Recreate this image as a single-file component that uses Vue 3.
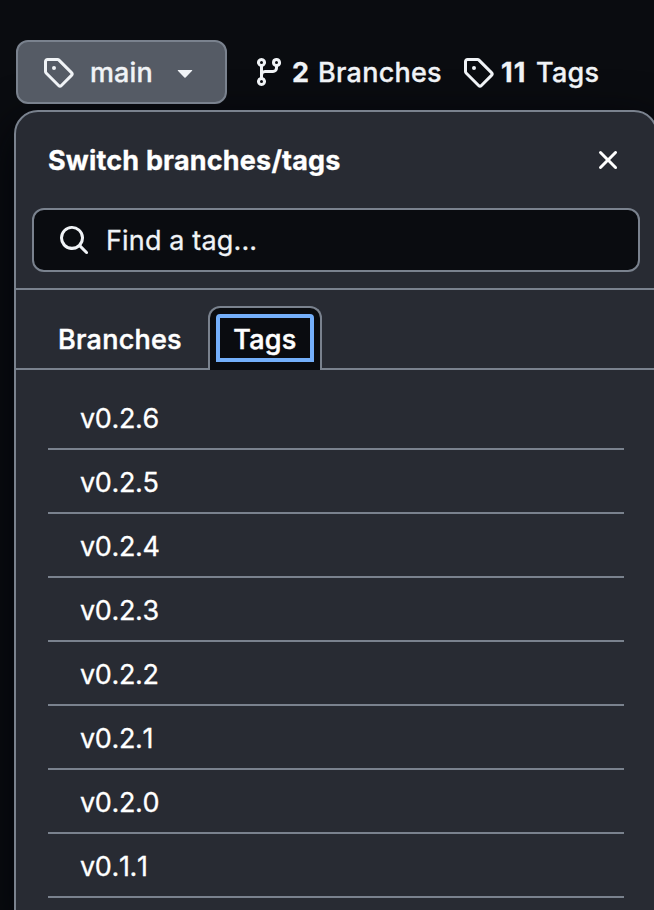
<script setup>
import { ref } from 'vue'

const tags = ['v0.2.6', 'v0.2.5', 'v0.2.4', 'v0.2.3', 'v0.2.2', 'v0.2.1', 'v0.2.0', 'v0.1.1']
const query = ref('')
const tagPath =
  'M1 7.775V2.75C1 1.784 1.784 1 2.75 1h5.025c.464 0 .91.184 1.238.513l6.25 6.25a1.75 1.75 0 0 1 0 2.474l-5.026 5.026a1.75 1.75 0 0 1-2.474 0l-6.25-6.25A1.752 1.752 0 0 1 1 7.775Zm1.5 0c0 .066.026.13.073.177l6.25 6.25a.25.25 0 0 0 .354 0l5.025-5.025a.25.25 0 0 0 0-.354l-6.25-6.25a.25.25 0 0 0-.177-.073H2.75a.25.25 0 0 0-.25.25ZM6 5a1 1 0 1 1 0 2 1 1 0 0 1 0-2Z'
</script>

<template>
  <main class="page">
    <div class="toolbar">
      <button class="ref-button">
        <svg class="icon" viewBox="0 0 16 16"><path :d="tagPath" /></svg>
        <span class="ref-name">main</span>
        <svg class="icon" viewBox="0 0 16 16"><path d="m4.427 7.427 3.396 3.396a.25.25 0 0 0 .354 0l3.396-3.396A.25.25 0 0 0 11.396 7H4.604a.25.25 0 0 0-.177.427Z" /></svg>
      </button>
      <a class="stat branches">
        <svg class="icon" viewBox="0 0 16 16"><path d="M9.5 3.25a2.25 2.25 0 1 1 3 2.122V6A2.5 2.5 0 0 1 10 8.5H6a1 1 0 0 0-1 1v1.128a2.251 2.251 0 1 1-1.5 0V5.372a2.25 2.25 0 1 1 1.5 0v1.836A2.493 2.493 0 0 1 6 7h4a1 1 0 0 0 1-1v-.628A2.25 2.25 0 0 1 9.5 3.25Zm-6 0a.75.75 0 1 0 1.5 0 .75.75 0 0 0-1.5 0Zm8.25-.75a.75.75 0 1 0 0 1.5.75.75 0 0 0 0-1.5ZM4.25 12a.75.75 0 1 0 0 1.5.75.75 0 0 0 0-1.5Z" /></svg>
        <strong>2</strong><span>Branches</span>
      </a>
      <a class="stat tags">
        <svg class="icon" viewBox="0 0 16 16"><path :d="tagPath" /></svg>
        <strong>11</strong><span>Tags</span>
      </a>
    </div>

    <section class="panel">
      <header class="panel-head">
        <h2>Switch branches/tags</h2>
        <svg class="icon" viewBox="0 0 16 16"><path d="M3.72 3.72a.75.75 0 0 1 1.06 0L8 6.94l3.22-3.22a.749.749 0 0 1 1.275.326.749.749 0 0 1-.215.734L9.06 8l3.22 3.22a.749.749 0 0 1-.326 1.275.749.749 0 0 1-.734-.215L8 9.06l-3.22 3.22a.751.751 0 0 1-1.042-.018.751.751 0 0 1-.018-1.042L6.94 8 3.72 4.78a.75.75 0 0 1 0-1.06Z" /></svg>
      </header>
      <div class="search-area">
        <label class="search">
          <svg class="icon" viewBox="0 0 16 16"><path d="M10.68 11.74a6 6 0 0 1-7.922-8.982 6 6 0 0 1 8.982 7.922l3.04 3.04a.749.749 0 0 1-.326 1.275.749.749 0 0 1-.734-.215ZM11.5 7a4.499 4.499 0 1 0-8.997 0A4.499 4.499 0 0 0 11.5 7Z" /></svg>
          <input v-model="query" placeholder="Find a tag..." />
        </label>
      </div>
      <nav class="tabs">
        <div class="tab">Branches</div>
        <div class="tab active"><span class="focus">Tags</span></div>
      </nav>
      <ul class="list">
        <li v-for="tag in tags" :key="tag">{{ tag }}</li>
      </ul>
    </section>
  </main>
</template>

<style>
body {
  background: #0a0c10;
  overflow: hidden;
}
</style>

<style scoped>
* {
  box-sizing: border-box;
}
.page {
  width: 654px;
  height: 910px;
  padding: 40px 0 0 14px;
  overflow: hidden;
  background: #0a0c10;
  color: #f0f3f6;
  font: 400 27px/42px Inter, 'Liberation Sans', sans-serif;
  -webkit-text-stroke: 0.3px currentColor;
}
.icon {
  display: block;
  flex: none;
  width: 32px;
  height: 32px;
  fill: currentColor;
}
.toolbar {
  display: flex;
  align-items: center;
  height: 64px;
  padding-left: 2px;
  white-space: nowrap;
}
.ref-button {
  display: flex;
  align-items: center;
  width: 211px;
  height: 64px;
  padding: 0 0 0 24px;
  border: 2px solid #7a828e;
  border-radius: 12px;
  background: #555b65;
  color: #f0f3f6;
  font: inherit;
  font-weight: 500;
}
.ref-name {
  width: 78px;
  margin: 0 1px 0 16px;
  padding-top: 2px;
  text-align: left;
  letter-spacing: 0.1px;
}
.stat {
  display: flex;
  align-items: center;
  font-weight: 500;
  letter-spacing: 0.25px;
}
.stat strong,
.stat span {
  padding-top: 2px;
}
.stat strong {
  font-weight: 700;
}
.branches {
  width: 209px;
  margin-left: 26px;
}
.branches strong {
  width: 26px;
  margin-left: 7px;
}
.tags strong {
  width: 35px;
  margin-left: 7px;
  font-kerning: none;
  letter-spacing: 1px;
}
.panel {
  width: 644px;
  height: 824px;
  margin-top: 6px;
  border: 2px solid #7a828e;
  border-radius: 24px;
  background: #282b33;
  box-shadow: 0 16px 48px #010409;
  color: #fff;
}
.panel-head {
  display: flex;
  align-items: center;
  justify-content: space-between;
  height: 96px;
  padding: 0 32px;
}
h2 {
  margin: 0;
  padding-top: 2px;
  font-size: 27px;
  font-weight: 700;
  letter-spacing: 0.18px;
}
.search-area {
  height: 82px;
  padding: 0 16px;
  border-bottom: 2px solid #7a828e;
}
.search {
  display: flex;
  align-items: center;
  height: 64px;
  padding-left: 24px;
  border: 2px solid #7a828e;
  border-radius: 12px;
  background: #0a0c10;
  color: #f0f3f6;
}
input {
  flex: 1;
  min-width: 0;
  margin-left: 16px;
  padding: 2px 0 0;
  border: 0;
  outline: 0;
  background: transparent;
  color: inherit;
  font: inherit;
  letter-spacing: 0.15px;
}
input::placeholder {
  color: #f0f3f6;
  opacity: 1;
}
.tabs {
  display: flex;
  align-items: flex-end;
  height: 80px;
  padding-left: 16px;
  border-bottom: 2px solid #7a828e;
  font-weight: 500;
  letter-spacing: 0.25px;
  -webkit-text-stroke-width: 0.5px;
}
.tab {
  display: flex;
  align-items: center;
  width: 176px;
  height: 64px;
  margin-bottom: -2px;
  padding: 3px 0 0 26px;
}
.active {
  width: 114px;
  padding: 6px 6px 8px;
  border: 2px solid #7a828e;
  border-bottom: 0;
  border-radius: 12px 12px 0 0;
  background: #0a0c10;
}
.focus {
  display: flex;
  align-items: center;
  justify-content: center;
  width: 98px;
  height: 48px;
  padding-top: 3px;
  border: 4px solid #74affa;
  border-radius: 4px 4px 0 0;
}
.list {
  margin: 0;
  padding: 16px 32px 0;
  list-style: none;
}
li {
  height: 64px;
  padding: 1px 0 0 32px;
  border-bottom: 2px solid #7a828e;
  font-kerning: none;
  letter-spacing: -0.35px;
  line-height: 64px;
}
</style>
